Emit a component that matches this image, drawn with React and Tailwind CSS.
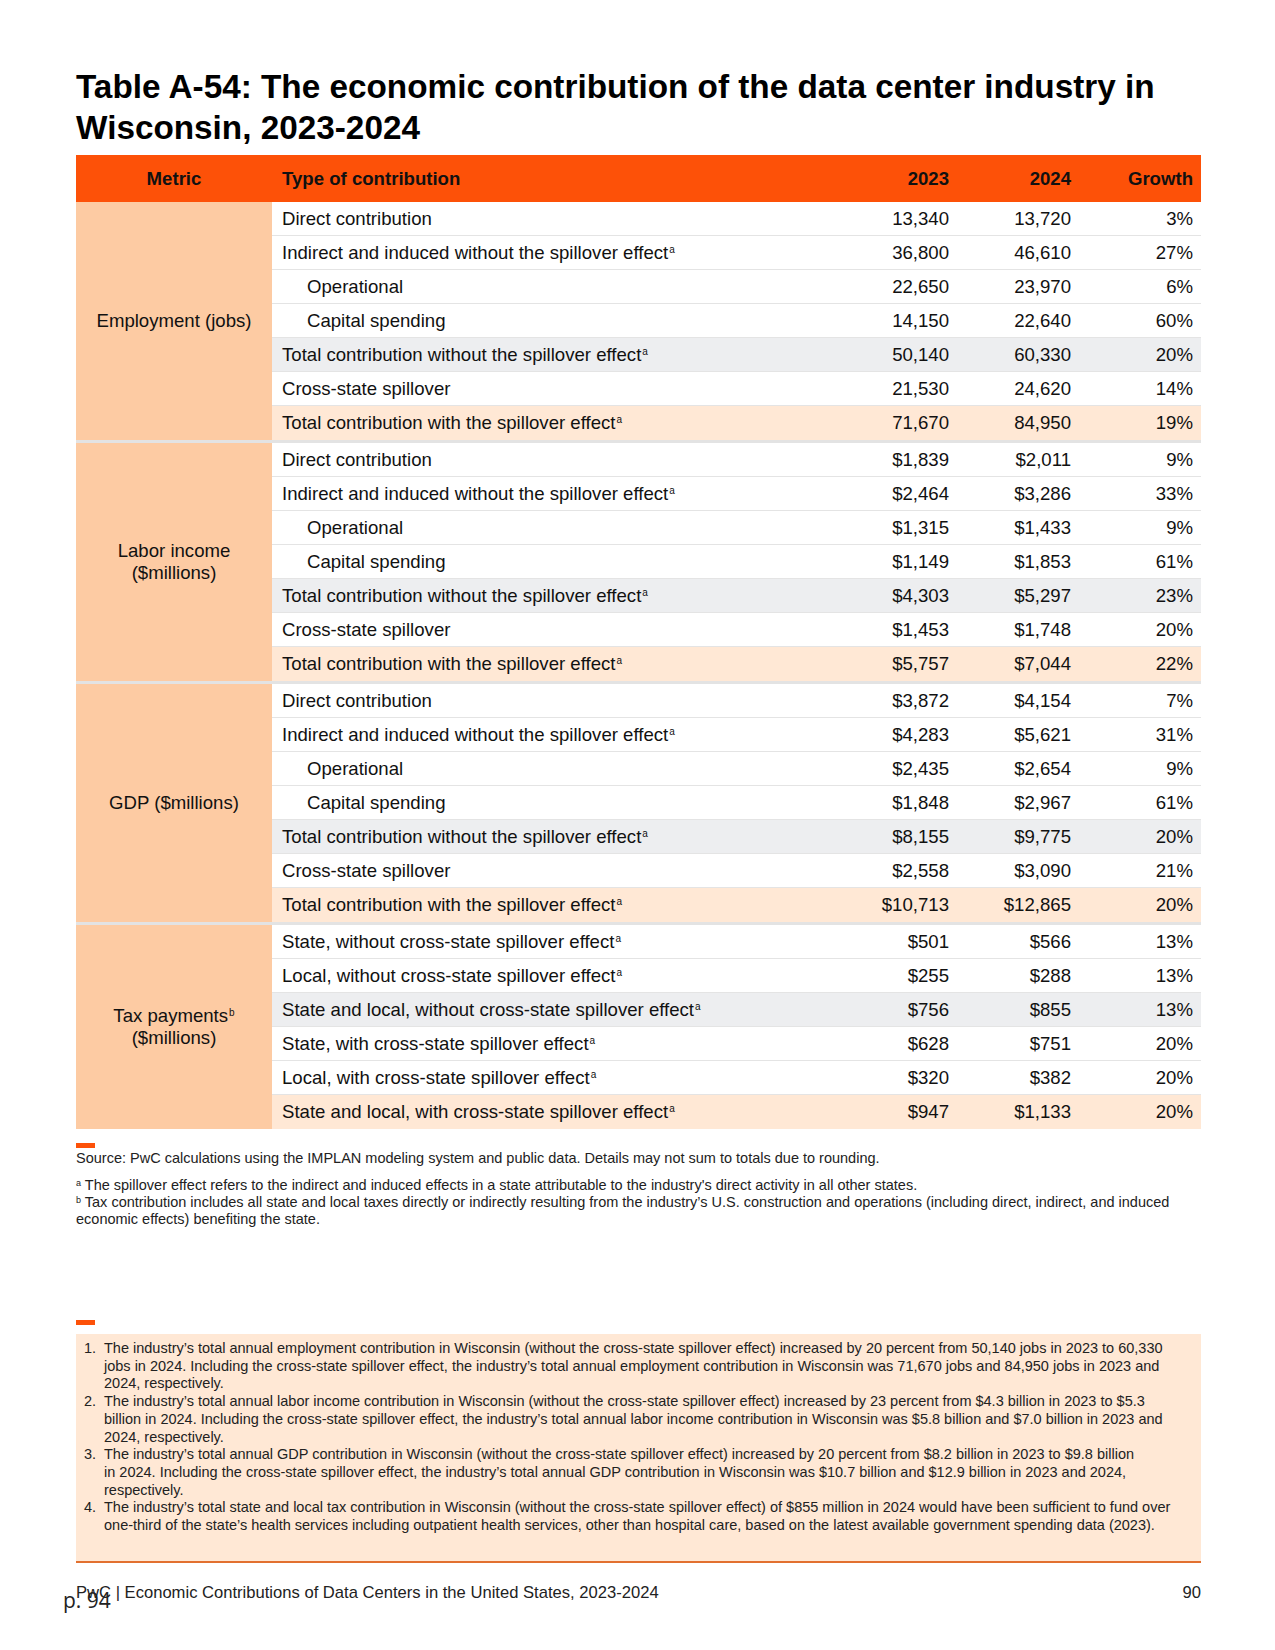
import React from "react";

const Sup = ({ c }) => (
  <span className="text-[10px] relative -top-[6px] ml-[1px] leading-none">{c}</span>
);

const groups = [
  {
    label: <>Employment (jobs)</>,
    rows: [
      { t: "Direct contribution", v: ["13,340", "13,720", "3%"] },
      { t: "Indirect and induced without the spillover effect", s: "a", v: ["36,800", "46,610", "27%"] },
      { t: "Operational", ind: true, v: ["22,650", "23,970", "6%"] },
      { t: "Capital spending", ind: true, v: ["14,150", "22,640", "60%"] },
      { t: "Total contribution without the spillover effect", s: "a", bg: "gray", v: ["50,140", "60,330", "20%"] },
      { t: "Cross-state spillover", v: ["21,530", "24,620", "14%"] },
      { t: "Total contribution with the spillover effect", s: "a", bg: "peach", v: ["71,670", "84,950", "19%"] },
    ],
  },
  {
    label: (
      <>
        Labor income
        <br />
        ($millions)
      </>
    ),
    rows: [
      { t: "Direct contribution", v: ["$1,839", "$2,011", "9%"] },
      { t: "Indirect and induced without the spillover effect", s: "a", v: ["$2,464", "$3,286", "33%"] },
      { t: "Operational", ind: true, v: ["$1,315", "$1,433", "9%"] },
      { t: "Capital spending", ind: true, v: ["$1,149", "$1,853", "61%"] },
      { t: "Total contribution without the spillover effect", s: "a", bg: "gray", v: ["$4,303", "$5,297", "23%"] },
      { t: "Cross-state spillover", v: ["$1,453", "$1,748", "20%"] },
      { t: "Total contribution with the spillover effect", s: "a", bg: "peach", v: ["$5,757", "$7,044", "22%"] },
    ],
  },
  {
    label: <>GDP ($millions)</>,
    rows: [
      { t: "Direct contribution", v: ["$3,872", "$4,154", "7%"] },
      { t: "Indirect and induced without the spillover effect", s: "a", v: ["$4,283", "$5,621", "31%"] },
      { t: "Operational", ind: true, v: ["$2,435", "$2,654", "9%"] },
      { t: "Capital spending", ind: true, v: ["$1,848", "$2,967", "61%"] },
      { t: "Total contribution without the spillover effect", s: "a", bg: "gray", v: ["$8,155", "$9,775", "20%"] },
      { t: "Cross-state spillover", v: ["$2,558", "$3,090", "21%"] },
      { t: "Total contribution with the spillover effect", s: "a", bg: "peach", v: ["$10,713", "$12,865", "20%"] },
    ],
  },
  {
    label: (
      <>
        Tax payments<Sup c="b" />
        <br />
        ($millions)
      </>
    ),
    rows: [
      { t: "State, without cross-state spillover effect", s: "a", v: ["$501", "$566", "13%"] },
      { t: "Local, without cross-state spillover effect", s: "a", v: ["$255", "$288", "13%"] },
      { t: "State and local, without cross-state spillover effect", s: "a", bg: "gray", v: ["$756", "$855", "13%"] },
      { t: "State, with cross-state spillover effect", s: "a", v: ["$628", "$751", "20%"] },
      { t: "Local, with cross-state spillover effect", s: "a", v: ["$320", "$382", "20%"] },
      { t: "State and local, with cross-state spillover effect", s: "a", bg: "peach", v: ["$947", "$1,133", "20%"] },
    ],
  },
];

const listItems = [
  [
    "The industry’s total annual employment contribution in Wisconsin (without the cross-state spillover effect) increased by 20 percent from 50,140 jobs in 2023 to 60,330",
    "jobs in 2024. Including the cross-state spillover effect, the industry’s total annual employment contribution in Wisconsin was 71,670 jobs and 84,950 jobs in 2023 and",
    "2024, respectively.",
  ],
  [
    "The industry’s total annual labor income contribution in Wisconsin (without the cross-state spillover effect) increased by 23 percent from $4.3 billion in 2023 to $5.3",
    "billion in 2024. Including the cross-state spillover effect, the industry’s total annual labor income contribution in Wisconsin was $5.8 billion and $7.0 billion in 2023 and",
    "2024, respectively.",
  ],
  [
    "The industry’s total annual GDP contribution in Wisconsin (without the cross-state spillover effect) increased by 20 percent from $8.2 billion in 2023 to $9.8 billion",
    "in 2024. Including the cross-state spillover effect, the industry’s total annual GDP contribution in Wisconsin was $10.7 billion and $12.9 billion in 2023 and 2024,",
    "respectively.",
  ],
  [
    "The industry’s total state and local tax contribution in Wisconsin (without the cross-state spillover effect) of $855 million in 2024 would have been sufficient to fund over",
    "one-third of the state’s health services including outpatient health services, other than hospital care, based on the latest available government spending data (2023).",
  ],
];

export default function App() {
  return (
    <div className="relative w-[1275px] h-[1650px] bg-white text-[#111] font-['Liberation_Sans',Arial,sans-serif]">
      <div className="pl-[76px] pr-[74px] pt-[66px]">
        <h1 className="text-[33.3px] leading-[41px] font-bold text-black">
          Table A-54: The economic contribution of the data center industry in Wisconsin, 2023-2024
        </h1>

        {/* Table */}
        <div className="mt-[7px] text-[18.6px]">
          <div className="grid grid-cols-[196px_1fr_122px_122px_122px] h-[47px] items-center bg-[#fd5108] font-bold text-[#111]">
            <div className="text-center">Metric</div>
            <div className="pl-[10px]">Type of contribution</div>
            <div className="text-right pr-2">2023</div>
            <div className="text-right pr-2">2024</div>
            <div className="text-right pr-2">Growth</div>
          </div>

          {groups.map((g, gi) => (
            <div
              key={gi}
              className={`flex ${gi > 0 ? "border-t-[3px] border-[#e3e3e3]" : ""}`}
            >
              <div className="w-[196px] shrink-0 bg-[#fdcba3] flex items-center justify-center text-center leading-[22px]">
                <div>{g.label}</div>
              </div>
              <div className="flex-1">
                {g.rows.map((r, ri) => {
                  const last = ri === g.rows.length - 1;
                  const bg =
                    r.bg === "gray"
                      ? "bg-[#edeef0]"
                      : r.bg === "peach"
                      ? "bg-[#ffe8d5]"
                      : "bg-white";
                  return (
                    <div
                      key={ri}
                      className={`grid grid-cols-[1fr_122px_122px_122px] h-[34px] items-center ${bg} ${
                        last ? "" : "border-b border-[#e4e4e4]"
                      }`}
                    >
                      <div className={r.ind ? "pl-[35px]" : "pl-[10px]"}>
                        {r.t}
                        {r.s && <Sup c={r.s} />}
                      </div>
                      <div className="text-right pr-2">{r.v[0]}</div>
                      <div className="text-right pr-2">{r.v[1]}</div>
                      <div className="text-right pr-2">{r.v[2]}</div>
                    </div>
                  );
                })}
              </div>
            </div>
          ))}
        </div>

        {/* Notes */}
        <div className="mt-[14px] w-[19px] h-[5px] bg-[#fd5108]" />
        <p className="mt-[2px] text-[14.5px] leading-[17px] text-[#222]">
          Source: PwC calculations using the IMPLAN modeling system and public data. Details may not sum to totals due to rounding.
        </p>
        <div className="mt-[10px] text-[14.5px] leading-[17px] text-[#222]">
          <p>
            <span className="text-[9px] relative -top-[4px] leading-none">a</span> The spillover effect refers to the indirect and induced effects in a state attributable to the industry's direct activity in all other states.
          </p>
          <p>
            <span className="text-[9px] relative -top-[4px] leading-none">b</span> Tax contribution includes all state and local taxes directly or indirectly resulting from the industry’s U.S. construction and operations (including direct, indirect, and induced
            <br />
            economic effects) benefiting the state.
          </p>
        </div>

        <div className="mt-[92px] w-[19px] h-[5px] bg-[#fd5108]" />
        <div className="mt-[9px] bg-[#ffe8d5] border-b-2 border-[#e2702f] pt-[6px] pb-[26px] pl-[8px] pr-[4px]">
          <ol className="text-[14.5px] leading-[17.7px] text-[#222]">
            {listItems.map((lines, i) => (
              <li key={i} className="flex">
                <span className="w-[20px] shrink-0">{i + 1}.</span>
                <span>
                  {lines.map((l, j) => (
                    <React.Fragment key={j}>
                      {j > 0 && <br />}
                      {l}
                    </React.Fragment>
                  ))}
                </span>
              </li>
            ))}
          </ol>
        </div>

        <div className="mt-[20px] flex justify-between text-[16.6px] leading-[20px] text-[#222]">
          <span>PwC | Economic Contributions of Data Centers in the United States, 2023-2024</span>
          <span>90</span>
        </div>
      </div>

      <div className="absolute left-[63px] top-[1587px] text-[21px] leading-[26px] text-[#222] font-['Open_Sans',sans-serif]">
        p. 94
      </div>
    </div>
  );
}
